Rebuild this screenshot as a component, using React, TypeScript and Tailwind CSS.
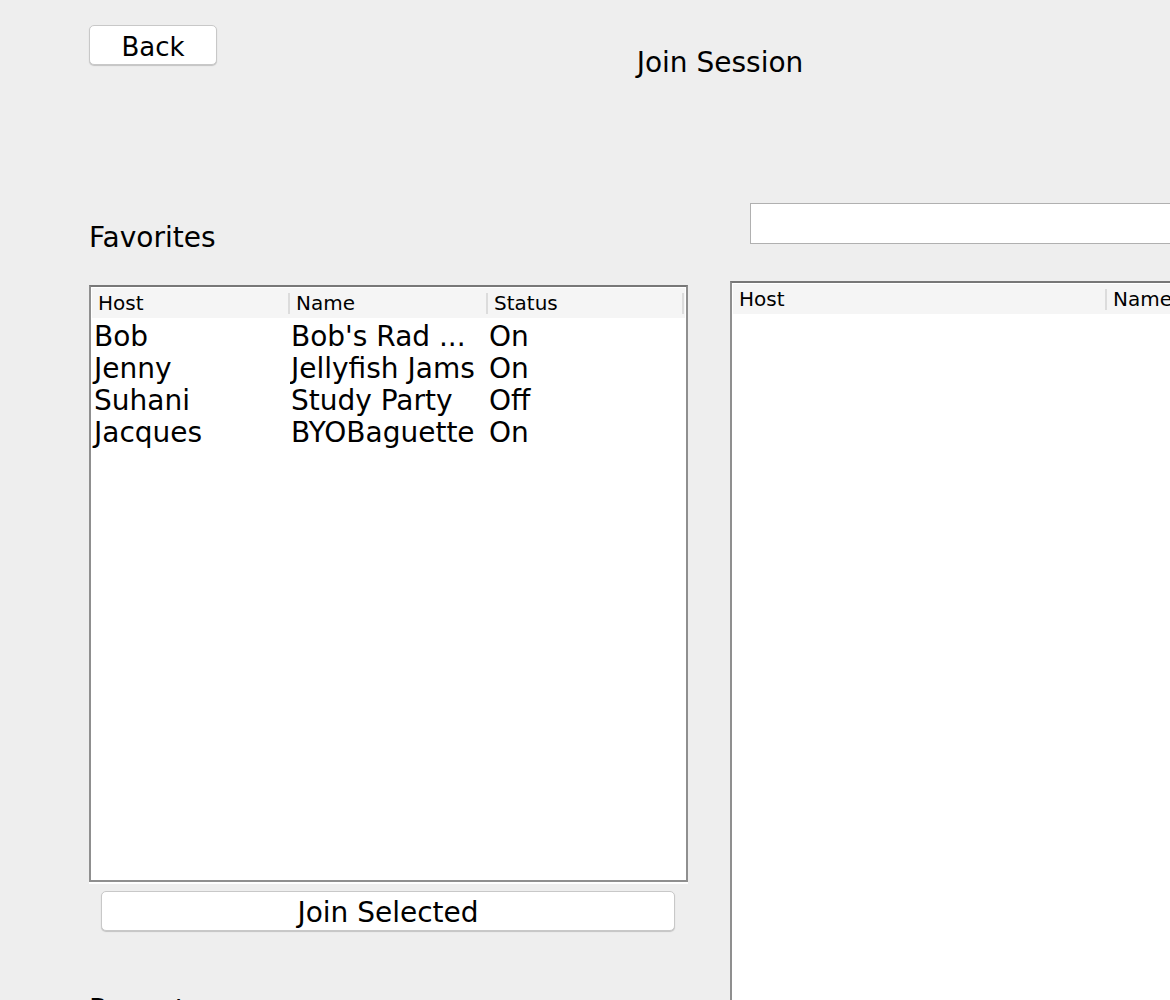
const rows: [string, string, string][] = [
  ["Bob", "Bob's Rad ...", "On"],
  ["Jenny", "Jellyfish Jams", "On"],
  ["Suhani", "Study Party", "Off"],
  ["Jacques", "BYOBaguette", "On"],
];

function HeaderCell({ label, width }: { label: string; width: string }) {
  return (
    <div className={`${width} h-full flex items-center justify-between pl-[6px]`}>
      <span className="text-[20px] leading-[30px] whitespace-nowrap">{label}</span>
      <span className="w-[2px] h-[21px] bg-[#dcdcdc]" />
    </div>
  );
}

export default function App() {
  return (
    <div className="w-[1170px] h-[1000px] overflow-hidden bg-[#eeeeee] text-black font-['DejaVu_Sans',sans-serif]">
      <div className="w-[1440px]">
        {/* header */}
        <div className="grid grid-cols-[1fr_auto_1fr] h-[200px] items-start">
          <div>
            <button className="ml-[89px] mt-[25px] w-[128px] h-[40px] pt-[3px] bg-white border border-[#c8c8c8] rounded-[5px] shadow-[0_1px_1px_rgba(0,0,0,0.18)] text-[26px] leading-[34px] text-center">
              Back
            </button>
          </div>
          <div className="mt-[47px] text-[28px] leading-[32px] whitespace-nowrap">Join Session</div>
          <div />
        </div>

        {/* body */}
        <div className="flex items-start">
          {/* left column */}
          <div className="ml-[89px] w-[599px] flex flex-col">
            <div className="mt-[22px] text-[28px] leading-[32px]">Favorites</div>
            <div className="mt-[31px] h-[597px] border-2 border-[#8f8f8f] border-t-[#777777] bg-white p-px flex flex-col">
              <div className="h-[30px] bg-[#f5f5f5] flex">
                <HeaderCell label="Host" width="w-[198px]" />
                <HeaderCell label="Name" width="w-[198px]" />
                <HeaderCell label="Status" width="w-[196px]" />
              </div>
              <div className="flex flex-col pt-[3px]">
                {rows.map((r) => (
                  <div key={r[0]} className="flex h-[32px] text-[28px] leading-[32px] whitespace-nowrap">
                    <div className="w-[198px] pl-[2px] overflow-hidden">{r[0]}</div>
                    <div className="w-[198px] pl-[1px] overflow-hidden">{r[1]}</div>
                    <div className="w-[196px] pl-[1px] overflow-hidden">{r[2]}</div>
                  </div>
                ))}
              </div>
            </div>
            <div className="h-[2px] bg-white" />
            <button className="mt-[7px] ml-[12px] w-[574px] h-[40px] pt-[3px] bg-white border border-[#c8c8c8] rounded-[5px] shadow-[0_1px_1px_rgba(0,0,0,0.18)] text-[28px] leading-[34px] text-center">
              Join Selected
            </button>
            <div className="mt-[63px] text-[28px] leading-[32px]">Recent</div>
          </div>

          {/* right column */}
          <div className="ml-[42px] w-[640px] flex flex-col">
            <div className="mt-[3px] ml-[20px] h-[41px] w-[620px] border border-[#b0b0b0] bg-white" />
            <div className="mt-[37px] h-[720px] border-l-2 border-t-2 border-[#8f8f8f] border-t-[#777777] bg-white p-px pr-0">
              <div className="h-[30px] bg-[#f5f5f5] flex">
                <HeaderCell label="Host" width="w-[374px]" />
                <HeaderCell label="Name" width="w-[200px]" />
              </div>
            </div>
          </div>
        </div>
      </div>
    </div>
  );
}
